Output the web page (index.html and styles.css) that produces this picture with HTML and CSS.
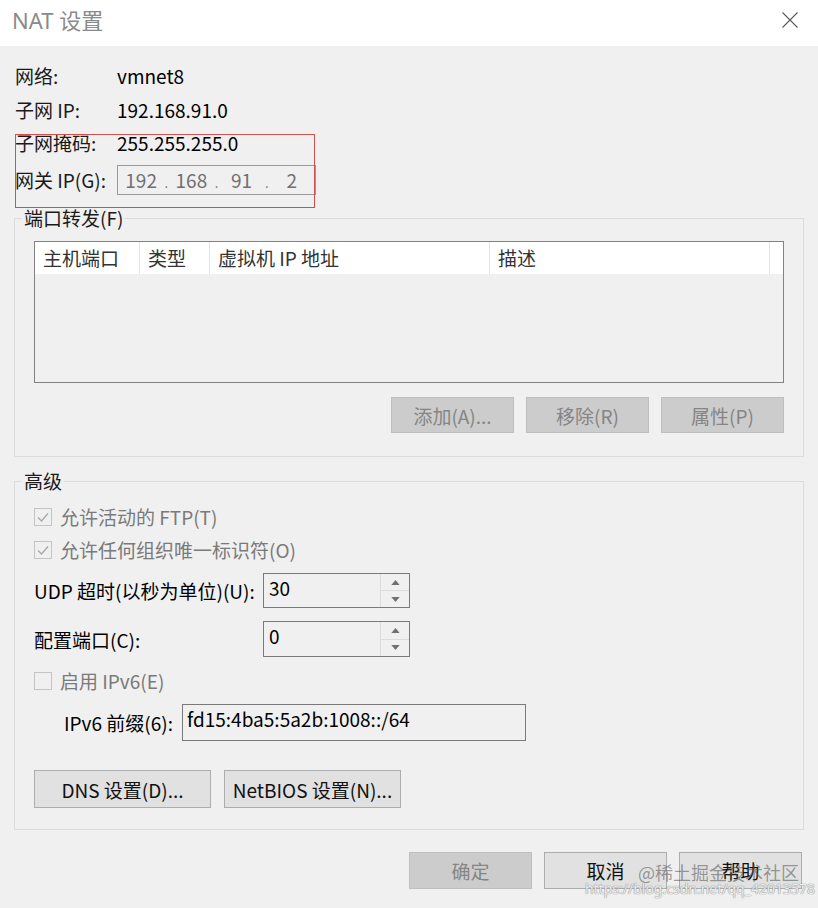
FILE: index.html
```html
<!DOCTYPE html>
<html lang="zh-CN">
<head>
    <meta charset="UTF-8">
    <title>NAT 设置</title>
    <link rel="stylesheet" href="styles.css">
</head>
<body>
    <div class="titlebar">
        <span class="title">NAT 设置</span>
        <svg class="close" width="16" height="16" viewBox="0 0 16 16">
            <path d="M0.5 0.5 L15.5 15.5 M15.5 0.5 L0.5 15.5" stroke="#5a5a5a" stroke-width="1.1" fill="none"/>
        </svg>
    </div>

    <div class="info">
        <span class="label">网络:</span><span>vmnet8</span>
        <span class="label">子网 IP:</span><span>192.168.91.0</span>
        <span class="label">子网掩码:</span><span>255.255.255.0</span>
        <span class="label">网关 IP(G):</span>
        <div class="ip-field">
            <span class="ip-seg">192</span><span class="ip-dot">.</span>
            <span class="ip-seg">168</span><span class="ip-dot">.</span>
            <span class="ip-seg">91</span><span class="ip-dot">.</span>
            <span class="ip-seg">2</span>
        </div>
    </div>
    <div class="mark-box"></div>

    <fieldset class="group ports">
        <legend>端口转发(F)</legend>
        <div class="list">
            <div class="list-head">
                <span>主机端口</span>
                <span>类型</span>
                <span>虚拟机 IP 地址</span>
                <span>描述</span>
                <span></span>
            </div>
        </div>
        <div class="btn-row">
            <button class="btn disabled">添加(A)...</button>
            <button class="btn disabled">移除(R)</button>
            <button class="btn disabled">属性(P)</button>
        </div>
    </fieldset>

    <fieldset class="group advanced">
        <legend>高级</legend>
        <div class="check-row disabled">
            <span class="check on">
                <svg width="16" height="16" viewBox="0 0 16 16"><polyline points="3,8.5 6.5,12 13,4.5" stroke="#a8a8a8" stroke-width="1.3" fill="none"/></svg>
            </span>
            允许活动的 FTP(T)
        </div>
        <div class="check-row disabled">
            <span class="check on">
                <svg width="16" height="16" viewBox="0 0 16 16"><polyline points="3,8.5 6.5,12 13,4.5" stroke="#a8a8a8" stroke-width="1.3" fill="none"/></svg>
            </span>
            允许任何组织唯一标识符(O)
        </div>

        <div class="spin-row udp">
            <span>UDP 超时(以秒为单位)(U):</span>
            <div class="spin">
                <span class="spin-value">30</span>
                <div class="spin-btns">
                    <span class="spin-btn"><svg width="9" height="5" viewBox="0 0 10 6"><polygon points="0,6 5,0 10,6" fill="#707070"/></svg></span>
                    <span class="spin-btn"><svg width="9" height="5" viewBox="0 0 10 6"><polygon points="0,0 10,0 5,6" fill="#707070"/></svg></span>
                </div>
            </div>
        </div>
        <div class="spin-row port">
            <span>配置端口(C):</span>
            <div class="spin">
                <span class="spin-value">0</span>
                <div class="spin-btns">
                    <span class="spin-btn"><svg width="9" height="5" viewBox="0 0 10 6"><polygon points="0,6 5,0 10,6" fill="#707070"/></svg></span>
                    <span class="spin-btn"><svg width="9" height="5" viewBox="0 0 10 6"><polygon points="0,0 10,0 5,6" fill="#707070"/></svg></span>
                </div>
            </div>
        </div>

        <div class="check-row disabled ipv6-check">
            <span class="check"></span>
            启用 IPv6(E)
        </div>
        <div class="ipv6-row">
            <span class="ipv6-label">IPv6 前缀(6):</span>
            <span class="text-field">fd15:4ba5:5a2b:1008::/64</span>
        </div>

        <div class="btn-row left">
            <button class="btn wide">DNS 设置(D)...</button>
            <button class="btn wide">NetBIOS 设置(N)...</button>
        </div>
    </fieldset>

    <div class="footer">
        <button class="btn disabled">确定</button>
        <button class="btn">取消</button>
        <button class="btn">帮助</button>
    </div>

    <div class="watermark">
        <span class="wm-site">@稀土掘金技术社区</span>
        <span class="wm-url">https://blog.csdn.net/qq_42013578</span>
    </div>
</body>
</html>
```

FILE: styles.css
```css
body {
    margin: 0;
    width: 818px;
    height: 908px;
    overflow: hidden;
    position: relative;
    background-color: #f0f0f0;
    font-family: "Noto Sans CJK SC", sans-serif;
    font-size: 19px;
    color: #000;
}

.titlebar {
    height: 46px;
    background: #fff;
    display: flex;
    justify-content: space-between;
    align-items: flex-start;
    padding: 0 20px 0 12px;
}

.title {
    font-family: "Noto Sans", "Noto Sans CJK SC", sans-serif;
    font-size: 22px;
    line-height: 40px;
    color: #8a8a8a;
}

.close {
    margin-top: 12px;
}

/* network info */
.info {
    display: grid;
    grid-template-columns: 102px auto;
    grid-template-rows: 34px 33px 34px 40px;
    align-items: center;
    padding: 13px 15px 0 15px;
    line-height: 24px;
}

.label {
    color: #1a1a1a;
}

.ip-field {
    width: 197px;
    height: 28px;
    border: 1px solid #9a9a9a;
    display: flex;
    align-items: center;
    color: #707070;
}

.ip-seg {
    flex: 1;
    text-align: center;
}

.ip-dot {
    width: 4px;
    font-size: 13px;
    padding-top: 6px;
    text-align: center;
}

.mark-box {
    position: absolute;
    left: 15px;
    top: 134px;
    width: 298px;
    height: 72px;
    border: 1px solid #d05050;
}

/* group boxes */
.group {
    margin: 0 14px;
    border: 1px solid #dcdcdc;
    padding: 0 19px 23px 19px;
}

.group legend {
    margin-left: -12px;
    padding: 0 2px;
    line-height: 24px;
    color: #1a1a1a;
}

.ports {
    margin-top: 6px;
    padding-top: 11px;
}

.list {
    height: 140px;
    border: 1px solid #828282;
    background: #f0f0f0;
}

.list-head {
    display: grid;
    grid-template-columns: 105px 70px 280px 280px 1fr;
    height: 32px;
    background: #fff;
}

.list-head span {
    border-right: 1px solid #e5e5e5;
    padding-left: 8px;
    line-height: 32px;
    color: #333;
    white-space: nowrap;
}

.list-head span:last-child {
    border-right: none;
}

.btn-row {
    display: flex;
    justify-content: flex-end;
    gap: 12px;
    margin-top: 14px;
}

.btn {
    width: 123px;
    height: 36px;
    border: 1px solid #adadad;
    background: #e1e1e1;
    font-family: inherit;
    font-size: 19px;
    color: #111;
    padding: 0;
}

.btn.disabled {
    background: #cccccc;
    border-color: #bfbfbf;
    color: #858585;
}

/* advanced */
.advanced {
    margin-top: 12px;
    padding-top: 7px;
    padding-bottom: 21px;
}

.check-row {
    height: 33px;
    display: flex;
    align-items: center;
    gap: 8px;
}

.check-row.disabled {
    color: #7a7a7a;
}

.check {
    width: 16px;
    height: 16px;
    border: 1px solid #c4c4c4;
    background: #f0f0f0;
    display: flex;
}

.spin-row {
    display: grid;
    grid-template-columns: 229px 147px;
    align-items: center;
}

.spin-row.udp {
    margin-top: 7px;
    height: 35px;
}

.spin-row.port {
    margin-top: 13px;
    height: 36px;
}

.spin {
    height: 100%;
    box-sizing: border-box;
    border: 1px solid #7a7a7a;
    background: #f0f0f0;
    display: flex;
}

.spin-value {
    flex: 1;
    padding: 2px 5px 0 5px;
    line-height: 24px;
    color: #000;
}

.spin-btns {
    width: 29px;
    display: flex;
    flex-direction: column;
}

.spin-btn {
    flex: 1;
    border: 1px solid #dcdcdc;
    border-right: none;
    display: flex;
    align-items: center;
    justify-content: center;
}

.spin-btn + .spin-btn {
    border-top: none;
    border-bottom: none;
}

.spin-btn:first-child {
    border-top: none;
}

.ipv6-check {
    margin-top: 7px;
}

.ipv6-row {
    display: flex;
    align-items: center;
    margin-top: 7px;
    padding-left: 30px;
    height: 37px;
}

.ipv6-label {
    width: 118px;
}

.text-field {
    width: 344px;
    height: 37px;
    box-sizing: border-box;
    border: 1px solid #7a7a7a;
    background: #f0f0f0;
    padding: 2px 0 0 4px;
    line-height: 24px;
    color: #000;
}

.btn-row.left {
    justify-content: flex-start;
    gap: 13px;
    margin-top: 29px;
}

.btn.wide {
    width: 177px;
    height: 38px;
}

/* dialog buttons */
.footer {
    display: flex;
    justify-content: flex-end;
    gap: 12px;
    margin-top: 22px;
    padding-right: 16px;
}

.footer .btn {
    height: 37px;
}

.watermark {
    position: absolute;
    left: 560px;
    top: 860px;
    width: 255px;
    display: flex;
    flex-direction: column;
    align-items: flex-end;
    pointer-events: none;
}

.wm-site {
    margin-right: 16px;
    font-size: 18px;
    line-height: 24px;
    color: rgba(80, 80, 80, 0.55);
}

.wm-url {
    font-family: "Noto Sans", sans-serif;
    font-size: 14px;
    line-height: 18px;
    margin-top: -4px;
    color: rgba(255, 255, 255, 0.85);
    text-shadow: 0 0 1px #888, 0 0 1px #888;
}
```
